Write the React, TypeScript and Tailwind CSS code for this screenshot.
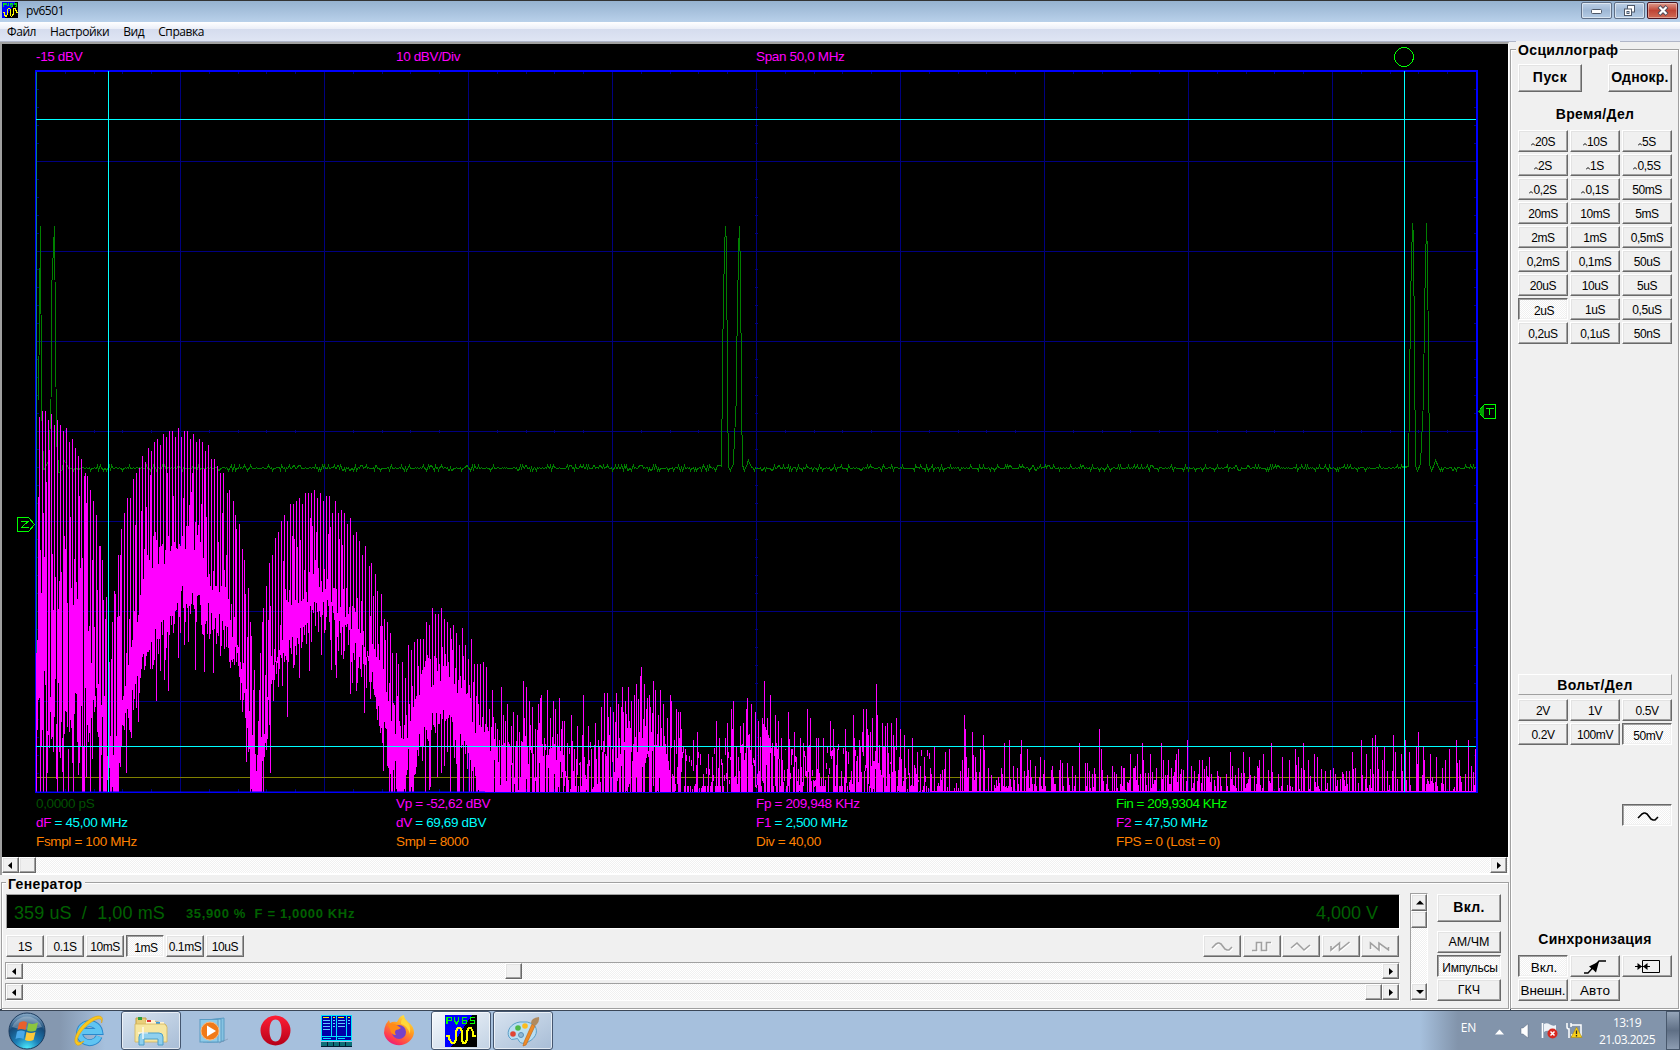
import React from "react";
import clsx from "clsx";

/* ---------- helpers ---------- */

function makeRandom(seed: number) {
  let s = seed;
  return () => {
    s = (s * 1664525 + 1013904223) % 4294967296;
    return s / 4294967296;
  };
}

type Segment = { x0: number; y0: number; density: number; points: string };

/* Spectrum peaks, "offset:level" pairs, three vertical units per pixel. */
const segments: Segment[] = [
  {
    x0: 0,
    y0: 380,
    density: 3,
    points:
      "110:820 115:350 118:111 127:93 136:93 145:120 154:102 163:135 172:120 181:135 190:153 199:144 208:186 217:178 226:204 235:228 244:237 253:288 256:279 262:288 271:330 280:363 289:405 298:498 301:498 307:540 310:660 316:717 320:651 329:846 334:837 338:726 343:633 346:642 352:711 355:525 361:525 364:447 373:399 382:354 391:354 400:297 409:279 418:264 427:228 436:246 445:204 454:213 463:186 472:178 481:195 490:162 499:171 508:153 517:153 526:171 535:144 544:171 553:153 562:153 571:178 580:162 589:186 598:178 607:186 616:213 625:195 634:237 643:237 652:258 661:279 670:279 682:339 688:330 700:363 706:405 709:447 718:432 727:507 733:540 736:642 745:624 751:726 754:768 760:930 763:870 769:1172 775:1023 778:930 781:819 787:726 790:684 799:618 808:549 817:525 826:474 835:456 844:423 853:405 862:423 871:372 880:372 889:363 898:354 907:372 916:339 925:339 934:339 943:330 952:354 961:339 970:363 979:348 988:348 997:399 1006:363 1015:399 1024:390 1033:399 1042:432 1051:414 1060:465 1069:456 1078:483 1087:525 1096:498 1108:558 1114:549 1126:582 1132:633 1144:642 1153:717 1162:726 1171:759 1177:819 1189:819 1195:852 1207:846",
  },
  {
    x0: 400,
    y0: 580,
    density: 2.904,
    points:
      "0:437 7:246 16:294 24:195 33:210 42:186 50:178 59:178 68:178 76:126 85:135 94:84 103:102 111:102 120:84 129:117 137:126 146:144 155:135 164:159 172:195 181:144 190:195 198:237 207:178 216:252 225:252 233:252 242:246 251:261 260:387 268:330 277:430 283:447 289:480 294:321 300:405 306:423 312:372 323:437 329:396 340:405 347:456 358:303 367:321 376:363 384:381 393:447 402:372 408:354 410:345 419:474 428:330 437:414 445:363 451:387 463:354 472:423 478:423 486:490 497:405 506:507 515:437 521:549 532:345 537:531 547:437 556:507 567:430 576:480 586:381 593:339 602:339 611:381 620:396 628:339 634:372 646:321 654:363 663:321 672:363 680:345 688:312 698:288 701:261 710:312 718:354 724:345 735:303 741:330 750:405 756:330 765:372 776:414 785:345 788:363 796:480 802:387 808:396 814:396 817:447 824:540 830:507 840:592 846:564 852:480 863:456 872:522 880:582 895:522 907:531 918:423 927:474 936:549 945:474 951:430 963:387 968:363 977:498 988:437 997:430 1005:387 1009:354 1020:372 1031:396 1040:423 1052:414 1058:303 1067:414 1075:345 1081:490 1090:405 1100:423 1107:474 1112:540 1119:507 1128:396 1136:507 1145:456 1151:531 1162:474 1171:490 1183:387 1191:414 1200:600 1209:474 1215:474 1229:474 1240:582 1249:423 1260:447 1270:507 1283:573 1293:447 1302:516 1316:405 1319:474 1333:480 1345:387 1354:387 1366:456 1372:414 1383:312 1386:405 1400:430 1409:437 1415:430 1427:430 1433:465 1441:414 1453:447 1464:465 1476:507 1488:474 1502:516 1511:558 1523:531 1531:564 1551:498 1564:610",
  },
  {
    x0: 920,
    y0: 660,
    density: 2.613,
    points:
      "56:360 66:276 77:267 90:384 100:384 110:300 116:165 119:207 122:291 127:324 137:216 145:291 158:267 166:225 179:324 199:360 207:370 215:342 221:249 229:384 234:240 244:318 254:324 262:282 265:240 273:333 281:267 290:300 302:318 315:291 325:300 347:318 366:300 373:309 386:309 398:318 417:249 432:309 437:309 451:342 468:207 474:267 502:318 513:342 526:318 534:324 551:282 563:318 568:282 581:249 602:282 618:324 631:249 636:300 649:300 657:324 667:300 670:282 675:267 699:240 709:318 717:333 730:300 738:300 748:318 757:291 770:360 784:352 800:342 811:276 816:318 832:324 845:276 861:291 882:318 887:300 897:282 918:249 937:342 948:291 965:300 981:267 988:291 1002:249 1015:300 1031:282 1038:291 1065:370 1080:324 1090:360 1109:360 1122:333 1131:276 1153:240 1166:282 1182:234 1190:225 1195:262 1208:300 1214:262 1222:333 1237:225 1243:276 1258:282 1268:240 1279:276 1297:262 1302:216 1315:262 1319:300 1334:282 1350:291 1366:324 1374:300 1383:267 1402:240 1410:300 1433:240 1440:318 1451:267",
  },
];

const FLOOR = 792;

/* Lower edges and secondary tops of the first lobes, in pixels. */
const lowerEdge: [number, number][] = [
  [36, 800], [60, 790], [80, 760], [92, 750], [104, 800], [117, 800], [121, 750], [128, 740], [134, 705],
  [145, 680], [155, 660], [168, 640], [178, 618], [184, 616], [200, 628], [214, 636], [226, 656], [236, 678],
  [244, 716], [250, 766], [254, 810], [261, 810], [265, 745], [270, 720], [277, 684], [287, 672], [298, 652],
  [312, 632], [326, 628], [338, 645], [350, 660], [361, 670], [370, 692], [380, 730], [390, 770], [400, 810],
  [408, 770], [418, 765], [430, 740], [440, 735], [450, 745], [462, 765], [475, 795], [485, 820],
];
const secondaryTop: [number, number][] = [
  [36, 600], [60, 590], [80, 640], [95, 690], [107, 750], [117, 720], [125, 665], [134, 610], [145, 565],
  [157, 542], [167, 538], [180, 522], [195, 530], [205, 552], [220, 580], [232, 610], [243, 665], [254, 740],
  [263, 715], [270, 660], [280, 620], [295, 582], [315, 568], [325, 572], [345, 598], [360, 622], [373, 650],
  [388, 690], [403, 735], [415, 685], [428, 665], [440, 655], [455, 670], [470, 700], [485, 720],
];

function interpolate(table: [number, number][], x: number) {
  for (let i = 1; i < table.length; i++) {
    if (x <= table[i][0]) {
      const [ax, ay] = table[i - 1];
      const [bx, by] = table[i];
      return ay + ((by - ay) * (x - ax)) / (bx - ax);
    }
  }
  return table[table.length - 1][1];
}

function spectrumPath() {
  const rnd = makeRandom(77);
  const peaks = new Map<number, number>();
  for (const s of segments) {
    for (const p of s.points.split(" ")) {
      const [a, b] = p.split(":").map(Number);
      const x = Math.floor(s.x0 + a / s.density);
      const y = Math.round(s.y0 + b / 3);
      peaks.set(x, Math.min(y, peaks.get(x) ?? 9999));
    }
  }
  const known = [...peaks.entries()].sort((a, b) => a[0] - b[0]) as [number, number][];
  let d = "";
  for (let x = 36; x < 1476; x++) {
    const peak = peaks.get(x);
    const envelope = interpolate(known, x);
    let top: number;
    let bottom: number;
    if (x < 104) {
      /* First lobe: separate stripes, many of which reach the floor. */
      if (peak !== undefined) {
        top = peak;
        bottom = rnd() < 0.35 ? FLOOR : 680 + rnd() * 100;
      } else {
        const low = x % 3 === 2 && rnd() < 0.85;
        top = low ? 650 + rnd() * 100 : envelope + 20 + rnd() * 170;
        bottom = low ? top + 8 + rnd() * 50 : rnd() < 0.4 ? FLOOR : 670 + rnd() * 115;
        if (low && rnd() < 0.3) top = 540 + rnd() * 90;
      }
    } else if (x < 485) {
      const low = interpolate(lowerEdge, x);
      const mid = Math.max(interpolate(secondaryTop, x), envelope + 12);
      if (peak !== undefined) {
        top = peak;
        bottom = low - rnd() * 45 + 12;
      } else {
        top = rnd() < 0.38 ? envelope + (mid - envelope) * (0.2 + rnd() * 0.8) : mid - 8 + rnd() * 36;
        bottom = low - rnd() * 40 + 8;
      }
      if (rnd() < 0.13) bottom = low + 15 + rnd() * 38;
      if (low > 765 && rnd() < 0.3) bottom = FLOOR;
      if (x > 388 && rnd() < 0.12) bottom = FLOOR;
    } else if (x < 930) {
      top = peak ?? envelope + 14 + rnd() * 60;
      bottom = rnd() < 0.72 ? FLOOR : FLOOR - rnd() * 45;
      if (peak === undefined && envelope > 735 && rnd() < 0.3) top = FLOOR - 2 - rnd() * 10;
    } else {
      bottom = FLOOR;
      top = peak ?? (rnd() < 0.38 ? FLOOR - 3 - rnd() * 22 : FLOOR - 1);
      const prev = peaks.get(x - 1);
      if (peak === undefined && prev !== undefined && rnd() < 0.45) top = prev + 14 + rnd() * 25;
    }
    bottom = Math.min(FLOOR, Math.round(bottom));
    top = Math.round(top);
    if (bottom - top < 1) top = bottom - 6;
    d += `M${x + 0.5} ${top}V${bottom}`;
  }
  return d;
}

function pulsePair(x: number, top: number) {
  return `L${x - 4} 466 L${x - 3} 400 L${x - 2} 300 L${x} ${top} L${x + 1} ${top + 14} L${x + 3} 466 L${x + 5} 471 L${x + 8} 464 L${x + 11} 400 L${x + 12} 310 L${x + 14} ${top} L${x + 15} ${top + 35} L${x + 17} 464 L${x + 19} 471 L${x + 22} 464 L${x + 23} 460 L${x + 26} 467`;
}

function scopePath() {
  const rnd = makeRandom(11);
  const noise = (from: number, to: number) => {
    let s = "";
    for (let x = from; x < to; x++) {
      const r = rnd();
      const y = r < 0.5 ? 468.5 : r < 0.75 ? 467.5 : r < 0.87 ? 470.5 : 465.5;
      s += ` L${x + 0.5} ${y}`;
    }
    return s;
  };
  return (
    "M38.500 400 L40.500 226 L41.500 400 L42.500 440 L44 470 L49 460 L51 400 L52 280 L54.500 226 L55 280 L56.500 440 L59 473 L62 470 L64 460 L67 465" +
    noise(68, 718) +
    pulsePair(725.3, 226) +
    noise(752, 1406) +
    pulsePair(1412.5, 223) +
    noise(1439, 1476)
  );
}

const spectrum = spectrumPath();
const trace = scopePath();

function gridPath() {
  let d = "";
  for (let i = 1; i < 10; i++) d += `M${Math.round(36 + i * 144) + 0.5} 72V791`;
  for (let i = 1; i < 8; i++) d += `M37 ${71.5 + i * 90}H1476`;
  for (let i = 1; i < 50; i++) {
    const x = Math.round(36 + i * 28.8) + 0.5;
    d += `M${x} 72v2M${x} 789v3M${x} 430v3`;
  }
  for (let i = 1; i < 40; i++) {
    const y = 71.5 + i * 18;
    d += `M37 ${y}h2M1474 ${y}h2M755 ${y}h3`;
  }
  return d;
}

function Chart() {
  return (
    <svg className="block shrink-0 overflow-visible" width="1506" height="725" viewBox="2 70 1506 725" fill="none" shapeRendering="crispEdges">
      <path d={gridPath()} stroke="#000080" />
      <path d="M35 71H1478M1477 71V792M36 71V792" stroke="#0000ff" strokeWidth="2" />
      <path d="M36.5 72V792" stroke="#008080" />
      <path d={trace} stroke="#008000" />
      <path d="M37 777.5H1476" stroke="#808000" />
      <path d={spectrum} stroke="#ff00ff" />
      <path d="M35 792.5H1478" stroke="#0000ff" />
      <path d="M35 791.5H485" stroke="#0000ff" strokeOpacity=".5" />
      <path d="M36 119.5H1476M36 746.5H1476M108.5 71V792M1404.5 71V792" stroke="#00ffff" />
      <circle cx="1404" cy="57" r="9.5" stroke="#00ff00" />
      <path d="M17.5 517.5H28.5L34.5 524.5L28.5 531.5H17.5Z M21 521.5H28L21.5 527.5H28.5" stroke="#00ff00" />
      <path d="M1495.5 404.5H1484.5L1478.5 411.5L1484.5 418.5H1495.5Z M1486 408.5H1494M1489.5 408.5V415" stroke="#00ff00" />
      <path d="M1484 405V418L1478 411.5Z" fill="#00a000" />
    </svg>
  );
}

/* ---------- Win9x style controls ---------- */

const raised =
  "border border-t-white border-l-white border-r-[#696969] border-b-[#696969] bg-[#f0f0f0] shadow-[inset_-1px_-1px_0_#a0a0a0,inset_1px_1px_0_#e3e3e3]";
const dither = "bg-[repeating-conic-gradient(#ffffff_0_25%,#f0f0f0_0_50%)] bg-[length:2px_2px]";
const sunken =
  "border border-t-[#696969] border-l-[#696969] border-r-white border-b-white shadow-[inset_1px_1px_0_#a0a0a0,inset_-1px_-1px_0_#f0f0f0] " +
  dither;
const heading = "text-[14px] font-bold leading-[18px] tracking-[0.35px]";

function Btn({
  children,
  pressed,
  className = "w-[50px] h-[22px]",
}: {
  children?: React.ReactNode;
  pressed?: boolean;
  className?: string;
}) {
  return (
    <div
      className={clsx(
        "flex shrink-0 items-center justify-center whitespace-nowrap leading-none text-black",
        pressed ? sunken : raised,
        pressed ? "pt-[3px] pl-[2px]" : "pt-px",
        className,
      )}
    >
      {children}
    </div>
  );
}

function Arrow({ dir, className }: { dir: "left" | "right" | "up" | "down"; className: string }) {
  const d = { left: "M6 1V8L2 4.5Z", right: "M3 1V8L7 4.5Z", up: "M1 6.5H9L5 2.5Z", down: "M1 3H9L5 7Z" }[dir];
  return (
    <div className={clsx("flex shrink-0 items-center justify-center", raised, className)}>
      <svg width="9" height="9" viewBox="0 0 9 9">
        <path d={d} fill="#000" />
      </svg>
    </div>
  );
}

const waves: Record<string, string> = {
  sine: "M1 8L3 6L5 4L7 3H8L10 4L14 9L16 10H18L21 7",
  square: "M1 10.500H5.500V2.500H10.500V10.500H15.500V2.500H20",
  triangle: "M1 8L7 3L14 10L20 5",
  sawUp: "M1 6V10L9.500 3V10L19.500 2",
  sawDown: "M1.500 9V3L10 10V3L19.500 10V7",
};

function Wave({ kind, color }: { kind: string; color: string }) {
  const d = waves[kind];
  return (
    <svg width="22" height="13" viewBox="0 0 22 13" fill="none">
      {color !== "#000" && <path d={d} stroke="#fff" strokeWidth="1.5" transform="translate(1 1)" />}
      <path d={d} stroke={color} strokeWidth="1.6" />
    </svg>
  );
}

/* ---------- window parts ---------- */

function PvIcon({ size }: { size: number }) {
  return (
    <svg width={size} height={size} viewBox="0 0 32 32" shapeRendering="crispEdges">
      <rect width="32" height="32" fill="#000" />
      <path d="M0 0H27L6 32H0Z" fill="#0000ff" />
      <path
        d="M2 9V2.500H6.500V5.500H2M9.500 2V6L11.500 8.500L13.500 6V2M22 2.500H17.500V8.500H21.500V5.500H17.500M30 2.500H25.500V5.500H29.500V8.500H25"
        stroke="#00ff00"
        strokeWidth="1.6"
        fill="none"
      />
      <path
        d="M1 21H4V24L7 28H9L11 25V16L13 13H15L17 16V25L18 28H20L22 25V16L24 13H26L28 17V21H31"
        stroke="#ffff00"
        strokeWidth="2"
        fill="none"
      />
    </svg>
  );
}

function TitleBar() {
  const btn =
    "flex h-[17px] w-[31px] items-center justify-center rounded-[2px] border border-[#5f6f86] bg-gradient-to-b from-[#bdd0e6] via-[#9fb8d5] to-[#b4cbe4] shadow-[inset_0_0_0_1px_#ffffff80]";
  return (
    <div className="flex h-[22px] items-start border-t border-[#333] bg-gradient-to-b from-[#96b2d0] to-[#b9d1ea] pl-[2px]">
      <div className="pt-px">
        <PvIcon size={16} />
      </div>
      <span className="ml-[8px] pt-[2px] font-['Open_Sans'] text-[12px] leading-[16px] tracking-[-0.45px]">pv6501</span>
      <div className="ml-auto flex gap-[2px] pt-px pr-[2px]">
        <div className={btn}>
          <svg width="12" height="6" viewBox="0 0 12 6">
            <rect x=".5" y="1.5" width="10" height="4" rx="1" fill="#fff" stroke="#4e5868" />
          </svg>
        </div>
        <div className={btn}>
          <svg width="13" height="12" viewBox="0 0 13 12" fill="#fff" stroke="#4e5868">
            <rect x="4.5" y=".5" width="7" height="6.5" />
            <rect x="1.5" y="4" width="7" height="6.5" />
            <rect x="4" y="6.5" width="2" height="2" fill="#9fb8d5" />
          </svg>
        </div>
        <div className="flex h-[17px] w-[31px] items-center justify-center rounded-[2px] border border-[#4a1420] bg-gradient-to-b from-[#dd9a8c] via-[#bf4436] to-[#cf6a55] shadow-[inset_0_0_0_1px_#ffffff60]">
          <svg width="12" height="11" viewBox="0 0 12 11">
            <path d="M2 1.5L10 9.5M10 1.5L2 9.5" stroke="#4e4a58" strokeWidth="4" />
            <path d="M2.5 2L9.5 9M9.5 2L2.5 9" stroke="#fff" strokeWidth="2.2" />
          </svg>
        </div>
      </div>
    </div>
  );
}

function MenuBar() {
  return (
    <div className="flex h-[20px] items-center gap-[14px] border-b border-[#b0b6c8] bg-[linear-gradient(#ffffff,#eceff8_35%,#d5dcee_36%,#dfe5f4)] pl-[7px] font-['Open_Sans'] text-[12px] leading-none tracking-[-0.42px]">
      <span>Файл</span>
      <span>Настройки</span>
      <span>Вид</span>
      <span>Справка</span>
    </div>
  );
}

function Readout({ label, value, labelClass, valueClass }: { label: string; value: string; labelClass: string; valueClass: string }) {
  return (
    <span>
      <span className={labelClass}>{label}</span>
      <span className={valueClass}>{value}</span>
    </span>
  );
}

function ScopeScreen() {
  const m = "text-[#ff00ff]";
  const c = "text-[#00ffff]";
  const row = "grid grid-cols-[360px_360px_360px_1fr] pl-[34px] leading-[17px] h-[19px] whitespace-pre";
  return (
    <div className="flex h-[813px] flex-col overflow-hidden bg-black text-[13.5px] tracking-[-0.35px]">
      <div className={clsx(row, m, "mb-[3px] mt-[4px]")}>
        <span>-15 dBV</span>
        <span>10 dBV/Div</span>
        <span>Span 50,0 MHz</span>
      </div>
      <Chart />
      <div className={row}>
        <span className="text-[#005000]">0,0000 pS</span>
        <span className={m}>Vp = -52,62 dBV</span>
        <span className={m}>Fp = 209,948 KHz</span>
        <span className="tracking-[-0.5px] text-[#00ff00]">Fin = 209,9304 KHz</span>
      </div>
      <div className={row}>
        <Readout label="dF" value=" = 45,00 MHz" labelClass={m} valueClass={c} />
        <Readout label="dV" value=" = 69,69 dBV" labelClass={m} valueClass={c} />
        <Readout label="F1" value=" = 2,500 MHz" labelClass={m} valueClass={c} />
        <Readout label="F2" value=" = 47,50 MHz" labelClass={m} valueClass={c} />
      </div>
      <div className={clsx(row, "text-[#ff8000]")}>
        <span>Fsmpl = 100 MHz</span>
        <span>Smpl = 8000</span>
        <span>Div = 40,00</span>
        <span>FPS = 0 (Lost = 0)</span>
      </div>
    </div>
  );
}

function Generator() {
  const track = "border border-t-[#a0a0a0] border-l-[#a0a0a0] border-r-white border-b-white";
  return (
    <fieldset className="relative ml-px mt-[7px] h-[127px] w-[1508px] border border-[#a0a0a0] shadow-[1px_1px_0_#fff,inset_1px_1px_0_#fff]">
      <div className={clsx("absolute -top-[8px] left-[4px] bg-[#f0f0f0] px-[2px]", heading)}>Генератор</div>
      <div className="flex pt-[11px]">
        <div className="ml-[3px] w-[1395px]">
          <div className={clsx("ml-px flex h-[35px] w-[1394px] items-center bg-black pl-[7px] pr-[21px] pt-[3px] text-[#006000]", track)}>
            <span className="whitespace-pre text-[18px] tracking-[0.1px]">359 uS  /  1,00 mS</span>
            <span className="ml-[21px] whitespace-pre pt-[2px] text-[13px] font-bold tracking-[0.65px]">35,900 %  F = 1,0000 KHz</span>
            <span className="ml-auto text-[18px]">4,000 V</span>
          </div>
          <div className="mt-[6px] flex pl-px">
            <div className="flex gap-[2px]">
              {["1S", "0.1S", "10mS", "1mS", "0.1mS", "10uS"].map((t) => (
                <Btn key={t} pressed={t === "1mS"} className="h-[22px] w-[38px] text-[12px] tracking-[-0.4px]">
                  {t}
                </Btn>
              ))}
            </div>
            <div className="ml-auto mr-px flex gap-[1.5px]">
              {["sine", "square", "triangle", "sawUp", "sawDown"].map((k) => (
                <Btn key={k} className="h-[22px] w-[38px]">
                  <Wave kind={k} color="#a0a0a0" />
                </Btn>
              ))}
            </div>
          </div>
          <div className={clsx("mt-[5px] flex h-[18px]", track, dither)}>
            <Arrow dir="left" className="w-[17px]" />
            <div className={clsx("ml-[482px] w-[17px]", raised)} />
            <Arrow dir="right" className="ml-auto w-[17px]" />
          </div>
          <div className={clsx("mt-[3px] flex h-[18px]", track, dither)}>
            <Arrow dir="left" className="w-[17px]" />
            <div className={clsx("ml-auto w-[17px]", raised)} />
            <Arrow dir="right" className="w-[17px]" />
          </div>
        </div>
        <div className={clsx("-mt-px ml-[10px] flex h-[108px] w-[18px] flex-col", track, dither)}>
          <Arrow dir="up" className="h-[17px]" />
          <div className={clsx("h-[17px]", raised)} />
          <Arrow dir="down" className="mt-auto h-[17px]" />
        </div>
        <div className="ml-[9px] flex flex-col text-[12.5px]">
          <Btn className="h-[28px] w-[64px] pb-[3px] text-[14px] font-bold tracking-[0.3px]">Вкл.</Btn>
          <Btn className="mt-[9px] h-[22px] w-[64px]">АМ/ЧМ</Btn>
          <Btn pressed className="mt-[2px] h-[22px] w-[64px] text-[12px] tracking-[-0.2px]">
            Импульсы
          </Btn>
          <Btn className="mt-[2px] h-[22px] w-[64px]">ГКЧ</Btn>
        </div>
      </div>
    </fieldset>
  );
}

const timeBase = [
  "^20S", "^10S", "^5S", "^2S", "^1S", "^0,5S", "^0,2S", "^0,1S", "50mS",
  "20mS", "10mS", "5mS", "2mS", "1mS", "0,5mS", "0,2mS", "0,1mS", "50uS",
  "20uS", "10uS", "5uS", "2uS", "1uS", "0,5uS", "0,2uS", "0,1uS", "50nS",
];

/* Slow time bases carry a small hat mark before the value. */
function TimeLabel({ text }: { text: string }) {
  if (!text.startsWith("^")) return <>{text}</>;
  return (
    <>
      <svg width="4" height="3" viewBox="0 0 4 3" className="mt-[5px]">
        <path d="M0 2.5L2 .5L4 2.5" stroke="#000" fill="none" />
      </svg>
      {text.slice(1)}
    </>
  );
}

function Oscilloscope() {
  return (
    <fieldset className="relative mt-[7px] h-[960px] w-[169px] border border-[#a0a0a0] pl-[7px] shadow-[1px_1px_0_#fff,inset_1px_1px_0_#fff]">
      <div className={clsx("absolute -top-[9px] left-[5px] bg-[#f0f0f0] px-[2px]", heading)}>Осциллограф</div>
      <div className="flex w-[154px] flex-col pt-[14px] text-[12px]">
        <div className="flex justify-between">
          <Btn className="h-[28px] w-[64px] pb-[3px] text-[14px] font-bold tracking-[0.5px]">Пуск</Btn>
          <Btn className="h-[28px] w-[64px] pb-[3px] text-[14px] font-bold tracking-[0.2px]">Однокр.</Btn>
        </div>
        <div className={clsx("mt-[13px] h-[18px] text-center", heading)}>Время/Дел</div>
        <div className="mt-[7px] grid grid-cols-[50px_50px_50px] gap-[2px] tracking-[-0.4px]">
          {timeBase.map((t) => (
            <Btn key={t} pressed={t === "2uS"}>
              <TimeLabel text={t} />
            </Btn>
          ))}
        </div>
        <div className={clsx("mt-[330px] h-[21px] border border-t-white border-l-white border-r-[#a0a0a0] border-b-[#a0a0a0] pt-px text-center", heading)}>
          Вольт/Дел
        </div>
        <div className="mt-[4px] grid grid-cols-[50px_50px_50px] gap-[2px] tracking-[-0.4px]">
          {["2V", "1V", "0.5V", "0.2V", "100mV", "50mV"].map((t) => (
            <Btn key={t} pressed={t === "50mV"}>
              {t}
            </Btn>
          ))}
        </div>
        <Btn pressed className="mt-[59px] h-[22px] w-[50px] self-end">
          <Wave kind="sine" color="#000" />
        </Btn>
        <div className={clsx("mt-[104px] h-[18px] whitespace-nowrap text-center", heading)}>Синхронизация</div>
        <div className="mt-[7px] grid grid-cols-[50px_50px_50px] gap-[2px]">
          <Btn pressed className="h-[22px] w-[50px] text-[13.5px]">
            Вкл.
          </Btn>
          <Btn>
            <svg width="24" height="14" viewBox="0 0 24 14">
              <path d="M1 13H5L16 1H23" stroke="#000" strokeWidth="1.3" fill="none" />
              <path d="M16 1.500L6 6.500L8 8V9L10 9.500L13 12.500Z" fill="#000" />
            </svg>
          </Btn>
          <Btn>
            <svg width="25" height="13" viewBox="0 0 25 13" fill="none" stroke="#000">
              <path d="M7.5 .5H24.5V12.5H7.5Z M0 6.5H15" />
              <path d="M2.5 3L7 6.5L2.5 10Z M12.5 3L8 6.5L12.5 10Z" fill="#000" stroke="none" />
            </svg>
          </Btn>
          <Btn className="h-[22px] w-[50px] text-[13.5px] tracking-[-0.2px]">Внешн.</Btn>
          <Btn className="h-[22px] w-[50px] text-[13.5px] tracking-[0.2px]">Авто</Btn>
        </div>
      </div>
    </fieldset>
  );
}

/* ---------- taskbar ---------- */

function StartOrb() {
  return (
    <svg width="38" height="38" viewBox="0 0 38 38">
      <defs>
        <radialGradient id="orb" cx=".5" cy="1" r="1">
          <stop offset="0" stopColor="#4ff0ff" />
          <stop offset=".35" stopColor="#1d80b8" />
          <stop offset=".7" stopColor="#164a78" />
          <stop offset="1" stopColor="#8fb0cc" />
        </radialGradient>
      </defs>
      <circle cx="19" cy="19" r="18" fill="url(#orb)" stroke="#1c3b5e" />
      <path d="M4 15A16 16 0 0 1 34 15Q19 20 4 15" fill="#fff" opacity=".28" />
      <path d="M11 11Q15 8 19 10.500L17.500 18Q13 16 9.500 18Z" fill="#e8602c" />
      <path d="M20.500 11Q25 13 30 10.500L28 18.500Q23 20.500 19 18.500Z" fill="#8cc63e" />
      <path d="M9 19.500Q13 17.500 17 19.500L15.500 27Q11 25 7.500 27Z" fill="#4aa8e8" />
      <path d="M18.500 20Q23 22 27.500 20L25.500 28Q21 30 17 28Z" fill="#fcc93a" />
    </svg>
  );
}

function IeIcon() {
  return (
    <svg width="32" height="32" viewBox="0 0 32 32" fill="none">
      <path d="M26 21.500A10 9.500 0 1 1 26.500 16.500H9" stroke="#2a87cc" strokeWidth="7" />
      <path d="M26 21.500A10 9.500 0 1 1 26.500 16.500H9" stroke="#5fc4f2" strokeWidth="5.200" />
      <path
        fillRule="evenodd"
        d="M4 30C-3 25 8 8 20 2.500C28 -1 31 2 28.500 8C29.500 3 26 2.500 20 6C10 12 2 24 5 27C6.500 28 9 27 11 26C9 29 6 31 4 30Z"
        fill="#f9c81c"
        stroke="#dda010"
        strokeWidth=".6"
      />
    </svg>
  );
}

function FolderIcon() {
  return (
    <svg width="34" height="32" viewBox="0 0 34 32">
      <path d="M2 3H12V7H24L32 10V26H2Z" fill="#e8cf7a" stroke="#c7a245" />
      <rect x="4" y="2" width="4" height="3" fill="#2f9e3f" />
      <path d="M12 5H21V9H12Z" fill="#fff3d0" />
      <rect x="13" y="5" width="4" height="2" fill="#d33" />
      <path d="M20 7H30V11H20Z" fill="#fff3d0" />
      <rect x="22" y="7" width="4" height="2" fill="#3a9be0" />
      <path d="M1 9H31L33 12V27H1Z" fill="#f6e6a0" stroke="#d3b45b" strokeWidth=".8" />
      <path d="M5 30V22Q5 18 9 18H25Q29 18 29 22V30H24V24H10V30Z" fill="#8fd0ee" stroke="#4b9fc9" />
      <path d="M9 12V24M4 18H14" stroke="#fff" strokeWidth="1.2" />
    </svg>
  );
}

function PlayerIcon() {
  return (
    <svg width="30" height="28" viewBox="0 0 30 28">
      <path d="M8 3L25 1V24L8 25Z" fill="#86c3e2" stroke="#5a9cc4" />
      <path d="M4 3L22 2V25L4 25Z" fill="#9fd4ec" stroke="#5a9cc4" />
      <rect x="1" y="2.500" width="18" height="22.500" fill="#8ecbe8" stroke="#5a9cc4" />
      <circle cx="11" cy="14" r="9" fill="#f07a18" stroke="#fbb87a" />
      <path d="M8 8.500V19.500L17 14Z" fill="#fff" />
      <path d="M20 26L29 22" stroke="#7189a5" opacity=".5" />
    </svg>
  );
}

function OperaIcon() {
  return (
    <svg width="31" height="31" viewBox="0 0 31 31">
      <defs>
        <linearGradient id="opera" x2="0" y2="1">
          <stop stopColor="#ff1f35" />
          <stop offset="1" stopColor="#b50018" />
        </linearGradient>
      </defs>
      <path
        fillRule="evenodd"
        d="M15.500 .5A15 15 0 1 0 15.500 30.500A15 15 0 1 0 15.500 .5ZM15.500 4.500C19.500 4.500 21.500 9 21.500 15.500S19.500 26.500 15.500 26.500S9.500 22 9.500 15.500S11.500 4.500 15.500 4.500Z"
        fill="url(#opera)"
      />
    </svg>
  );
}

function ServersIcon() {
  return (
    <svg width="32" height="32" viewBox="0 0 32 32" shapeRendering="crispEdges">
      <rect x=".5" y=".5" width="30" height="25" fill="#0000a8" stroke="#00e5ff" />
      <path d="M10.500 1V21M15.500 1V25M25.500 1V21M1 21.500H31" stroke="#00e5ff" />
      <path d="M2 2.500H8M12 2.500H14M17 2.500H23M27 2.500H29" stroke="#ffee00" />
      <path d="M2 5.500H9M2 8.500H9M2 11.500H9M2 14.500H9M12 5.500H14M12 8.500H14M12 11.500H14M17 5.500H24M17 8.500H24M17 11.500H24M27 5.500H29M27 8.500H29" stroke="#5fc8ff" />
      <path d="M2 23.500H10M17 23.500H24" stroke="#00e5ff" />
      <rect y="27" width="31" height="4" fill="#0d6f78" />
      <path d="M0 31.500H31M6.500 27V31M12.500 27V31M18.500 27V31M24.500 27V31" stroke="#001a30" />
    </svg>
  );
}

function FirefoxIcon() {
  return (
    <svg width="32" height="32" viewBox="0 0 32 32">
      <defs>
        <linearGradient id="fox" x1=".8" x2=".2" y2="1">
          <stop stopColor="#fff04a" />
          <stop offset=".4" stopColor="#ff9a1f" />
          <stop offset=".8" stopColor="#ff3a50" />
          <stop offset="1" stopColor="#e31587" />
        </linearGradient>
      </defs>
      <path d="M3 9L6 5L7 8Q10 6 14 7Q16 1 21 0Q21 4 25 7Q31 11 31 18A15.200 14.500 0 0 1 1 18Q1 13 3 9Z" fill="url(#fox)" />
      <circle cx="16" cy="17" r="7" fill="#7542c9" />
      <path d="M5 10Q10 7 15 11L18 13Q15 15 13 15Q11 17 13 20Q8 20 7 14Z" fill="#ff8a16" />
      <path d="M20 3Q29 9 27 19Q24 10 18 9Q18 5 20 3Z" fill="#ffd83a" />
    </svg>
  );
}

function PaintIcon() {
  return (
    <svg width="34" height="34" viewBox="0 0 34 34">
      <path d="M14 8C5 9 0 17 3 23Q5 27 9 25Q12 23 13 27Q15 31 22 28C31 24 33 15 27 10Q22 7 14 8Z" fill="#b9def2" stroke="#5c9fc8" />
      <circle cx="7" cy="20" r="2.800" fill="#e04434" />
      <circle cx="12" cy="14" r="2.800" fill="#4fb848" />
      <circle cx="19" cy="12" r="2.800" fill="#fbbc1e" />
      <circle cx="15" cy="21" r="2.500" fill="#8fb8d4" stroke="#5c8fb8" />
      <path d="M26 10L29 12L20 31L17 32L18 28Z" fill="#ee8a28" stroke="#b96312" strokeWidth=".6" />
      <path d="M25 9Q25 4 33 3Q34 8 29 12Z" fill="#b08a5e" />
    </svg>
  );
}

function TaskButton({ children, active, className }: { children: React.ReactNode; active?: boolean; className: string }) {
  return (
    <div
      className={clsx(
        "flex h-[39px] shrink-0 items-center justify-center rounded-[3px] border border-[#44566f] shadow-[inset_0_0_0_1px_#ffffffa0]",
        active ? "bg-gradient-to-br from-[#f4f8fc] to-[#c2d2e4]" : "bg-gradient-to-br from-[#d7e3f0] to-[#a8bdd6]",
        className,
      )}
    >
      {children}
    </div>
  );
}

function Taskbar() {
  return (
    <div className="flex h-[41px] items-center border-t-2 border-[#3a4656] bg-[linear-gradient(90deg,#8598b0_0,#8598b0_60px,#a6c0dd_105px,#a6c0dd_1420px,#8294ab_1458px,#8294ab_100%)]">
      <div className="ml-[8px]"><StartOrb /></div>
      <div className="ml-[27px]"><IeIcon /></div>
      <TaskButton className="ml-[16px] w-[60px]"><FolderIcon /></TaskButton>
      <div className="ml-[18px]"><PlayerIcon /></div>
      <div className="ml-[31px]"><OperaIcon /></div>
      <div className="ml-[30px]"><ServersIcon /></div>
      <div className="ml-[30px]"><FirefoxIcon /></div>
      <TaskButton active className="ml-[16px] w-[60px]"><PvIcon size={32} /></TaskButton>
      <TaskButton className="ml-[2px] w-[60px]"><PaintIcon /></TaskButton>
      <div className="ml-auto flex h-full items-center font-['Open_Sans'] text-[12px] leading-[17px] text-white">
        <span className="pb-[6px] tracking-[-0.2px]">EN</span>
        <svg className="ml-[19px] mt-[3px]" width="9" height="6" viewBox="0 0 9 6">
          <path d="M0 5.500L4.500 .5L9 5.500Z" fill="#fff" />
        </svg>
        <svg className="ml-[16px]" width="10" height="16" viewBox="0 0 10 16">
          <path d="M1 5H3L8 .8V15L3 11H1Z" fill="#fff" stroke="#5b6b80" strokeWidth=".5" />
        </svg>
        <svg className="ml-[11px]" width="17" height="17" viewBox="0 0 17 17">
          <path d="M1.500 1V16" stroke="#fff" strokeWidth="1.600" />
          <path d="M3 2Q6 .5 9 2.500T15 3V10Q12 11 9 9.500T3 10Z" fill="#eef2f7" />
          <circle cx="11.500" cy="11.500" r="5" fill="#d8281e" />
          <path d="M9.500 9.500L13.500 13.500M13.500 9.500L9.500 13.500" stroke="#fff" strokeWidth="1.500" />
        </svg>
        <svg className="ml-[7px]" width="18" height="17" viewBox="0 0 18 17">
          <path d="M6 3H16V13H6M2 1V5Q2 7 4 7H4V16M6 1V5" stroke="#fff" strokeWidth="1.500" fill="none" />
          <path d="M11.500 5L17 15.500H6Z" fill="#f7cf1c" stroke="#a88400" strokeWidth=".5" />
          <path d="M11.500 8.500V12M11.500 13V14.500" stroke="#222" strokeWidth="1.300" />
        </svg>
        <div className="ml-[14px] w-[60px] text-center tracking-[-0.5px]">
          <div>13:19</div>
          <div className="whitespace-nowrap">21.03.2025</div>
        </div>
        <div className="ml-[9px] h-full w-[14px] border border-[#48586c] bg-gradient-to-b from-[#95a5b9] via-[#5f6f85] to-[#8d9db2]" />
      </div>
    </div>
  );
}

export default function App() {
  return (
    <div className="h-[1050px] w-[1680px] overflow-hidden bg-[#f0f0f0] font-['Liberation_Sans',sans-serif] text-black">
      <TitleBar />
      <MenuBar />
      <div className="flex h-[967px]">
        <div className="w-[1510px]">
          <div className="w-[1509px] border-l-2 border-t-2 border-r border-[#a0a0a0] border-r-white">
            <ScopeScreen />
            <div className={clsx("flex h-[16px]", dither)}>
              <Arrow dir="left" className="w-[17px]" />
              <div className={clsx("w-[17px]", raised)} />
              <Arrow dir="right" className="ml-auto mr-px w-[17px]" />
            </div>
            <div className="h-[2px] bg-white" />
          </div>
          <Generator />
        </div>
        <Oscilloscope />
      </div>
      <Taskbar />
    </div>
  );
}
